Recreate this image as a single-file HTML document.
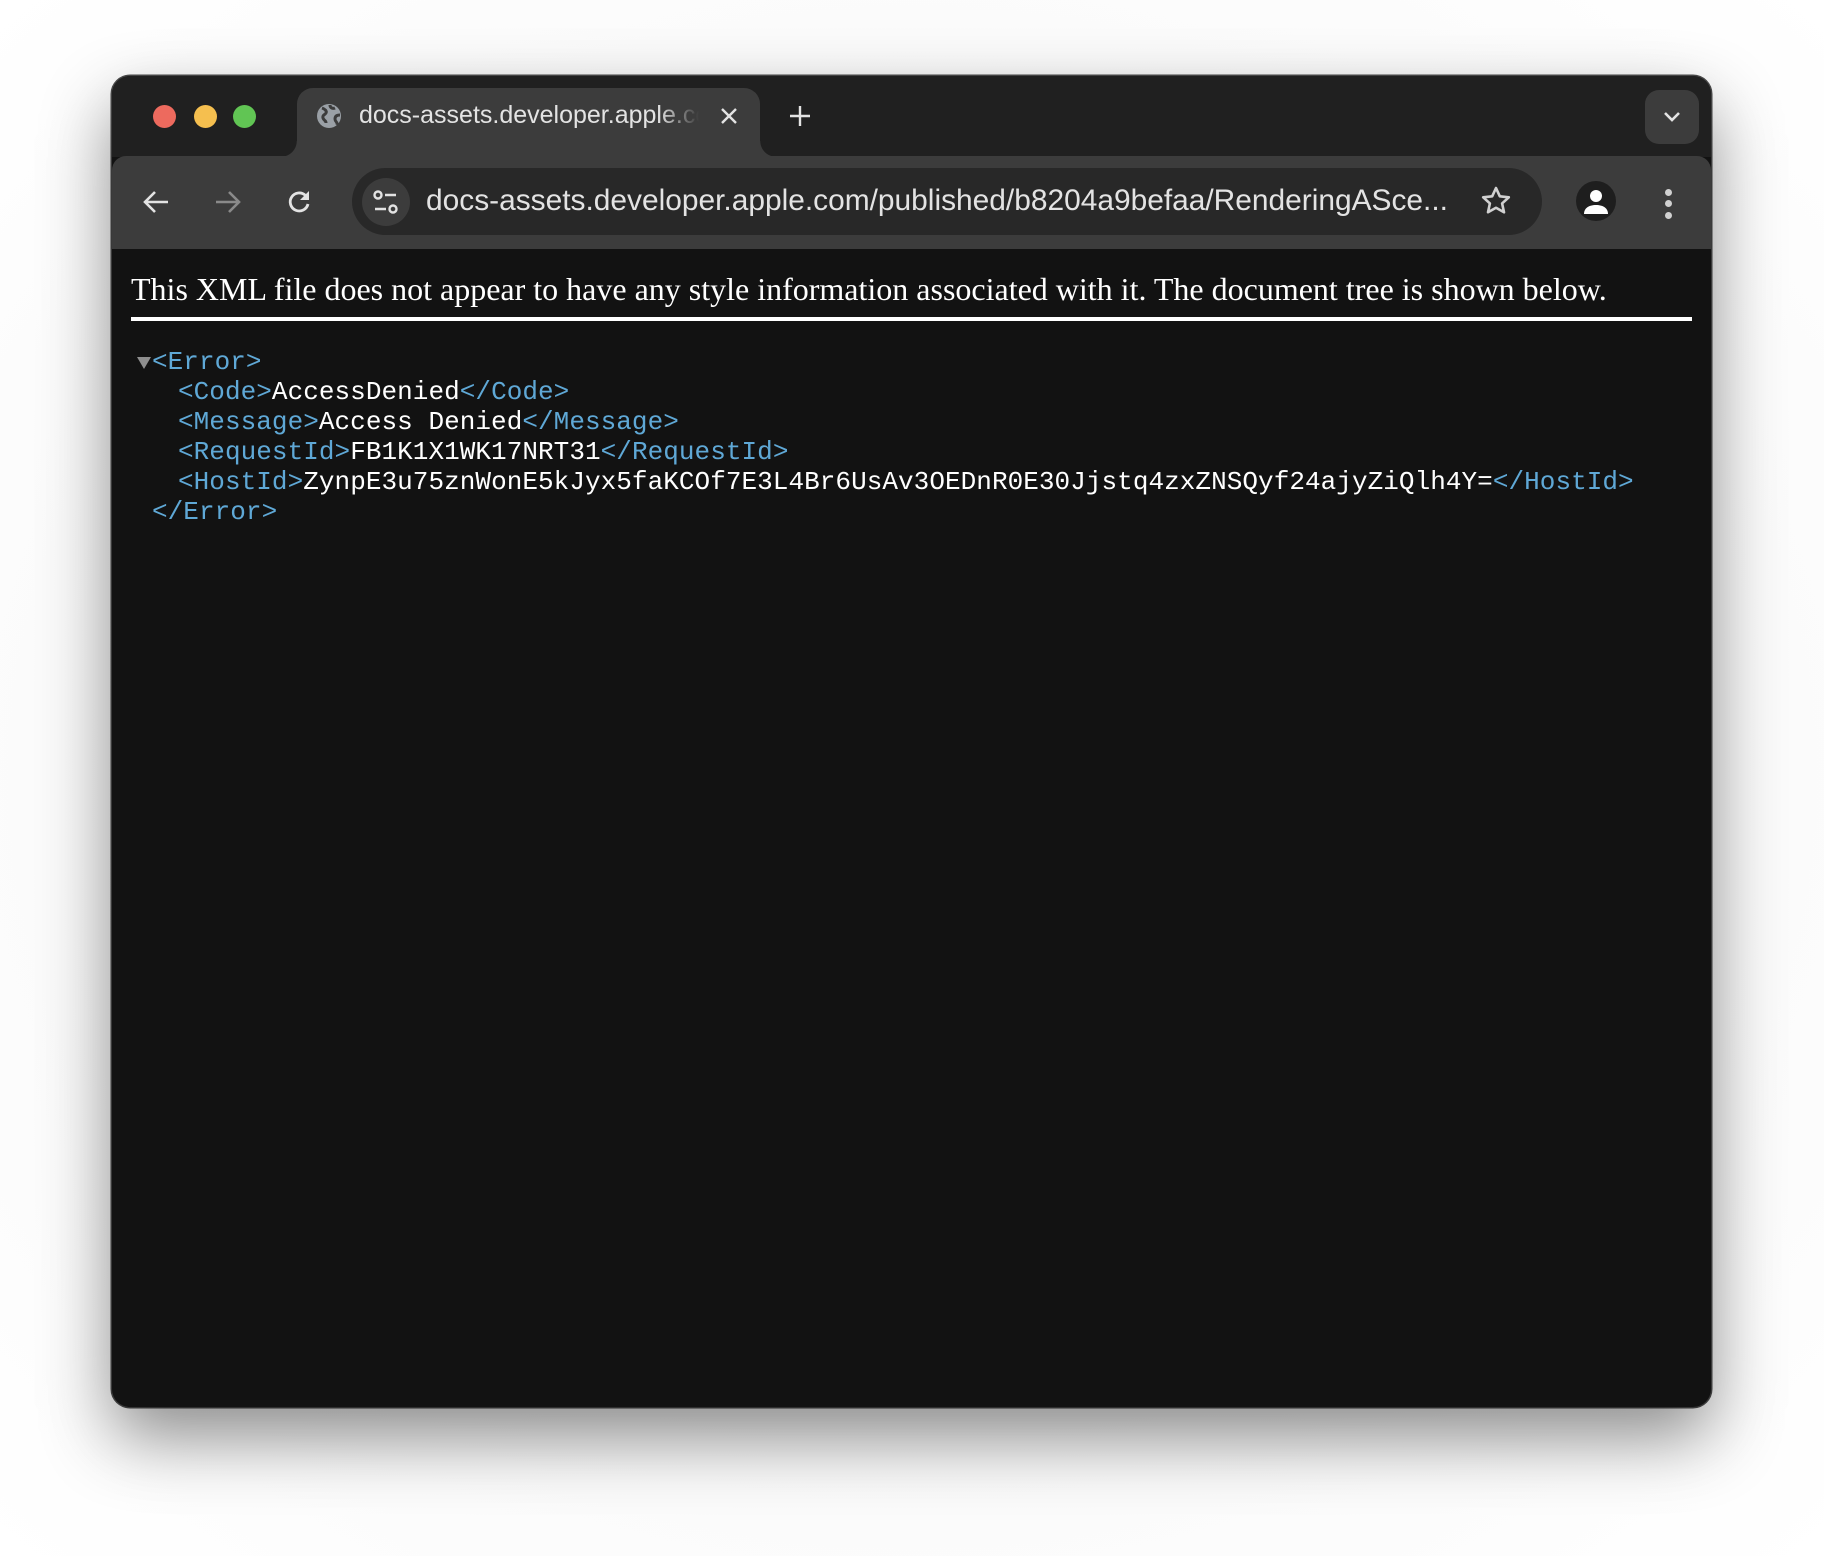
<!DOCTYPE html>
<html><head><meta charset="utf-8"><style>
*{margin:0;padding:0;box-sizing:border-box}
html,body{width:1824px;height:1556px;overflow:hidden;background:#fff}
body{background:radial-gradient(ellipse at 50% 50%,#f6f6f6 0%,#fafafa 60%,#fff 100%);position:relative;font-family:"Liberation Sans",sans-serif}
.win{position:absolute;left:112px;top:76px;width:1599px;height:1331px;border-radius:18px;background:#121212;overflow:hidden;box-shadow:0 30px 70px rgba(0,0,0,.45),0 0 0 1.5px #4a4a4a;}
.tabbar{position:absolute;left:0;top:0;width:100%;height:81px;background:#202020}
.toolbar{position:absolute;left:0;top:80px;width:100%;height:93px;background:#3c3c3c;border-top-left-radius:14px;border-top-right-radius:14px}
.dot{position:absolute;top:29px;width:23px;height:23px;border-radius:50%}
.tab{position:absolute;left:185px;top:12px;width:463px;height:75px;background:#3c3c3c;border-radius:16px 16px 0 0}
.tab:before,.tab:after{content:"";position:absolute;bottom:6px;width:16px;height:16px}
.tab:before{left:-16px;background:radial-gradient(circle at 0 0,#202020 15.5px,#3c3c3c 16px)}
.tab:after{right:-16px;background:radial-gradient(circle at 100% 0,#202020 15.5px,#3c3c3c 16px)}
.tabtxt{position:absolute;left:62px;top:13px;font-size:25px;color:#e3e3e3;white-space:nowrap;width:340px;overflow:hidden;-webkit-mask-image:linear-gradient(90deg,#000 88%,transparent 100%)}
.omni{position:absolute;left:240px;top:12px;width:1190px;height:67px;border-radius:34px;background:#282828}
.url{position:absolute;left:74px;top:16px;font-size:29.9px;color:#e3e3e3;white-space:nowrap}
.hdr{position:absolute;left:19px;top:195px;font-family:"Liberation Serif",serif;font-size:32px;color:#fff;white-space:nowrap}
.rule{position:absolute;left:19px;top:241px;width:1561px;height:4px;background:#fff}
.xml{position:absolute;font-family:"Liberation Mono",monospace;font-size:26px;line-height:30px;color:#fff;white-space:pre;letter-spacing:0.05px}
.t{color:#5fa8d6}
</style></head><body>
<div class="win">
 <div class="tabbar"></div>
 <div class="dot" style="left:41px;background:#ed6a5e"></div>
 <div class="dot" style="left:82px;background:#f5bf4f"></div>
 <div class="dot" style="left:121px;background:#61c554"></div>
 <div class="tab">
  <svg style="position:absolute;left:19px;top:15px" width="26" height="26" viewBox="0 0 26 26"><circle cx="13" cy="13" r="12" fill="#9aa0a6"/><path d="M6 5c3 1 5 3 4 5s-4 2-3 5 3 2 3 5M14 2c0 3 3 4 5 3M24 12c-3 0-5 1-5 4s3 3 2 6" stroke="#3c3c3c" stroke-width="3" fill="none"/></svg>
  <div class="tabtxt">docs-assets.developer.apple.com</div>
  <svg style="position:absolute;left:423px;top:19px" width="18" height="18" viewBox="0 0 18 18"><path d="M2 2L16 16M16 2L2 16" stroke="#e3e3e3" stroke-width="2.4"/></svg>
 </div>
 <svg style="position:absolute;left:677px;top:29px" width="22" height="22" viewBox="0 0 22 22"><path d="M11 1v20M1 11h20" stroke="#e3e3e3" stroke-width="2.4"/></svg>
 <div style="position:absolute;left:1533px;top:14px;width:54px;height:54px;border-radius:14px;background:#3c3c3c"></div>
 <svg style="position:absolute;left:1551px;top:35px" width="18" height="12" viewBox="0 0 18 12"><path d="M2 2l7 7 7-7" stroke="#e3e3e3" stroke-width="2.6" fill="none"/></svg>
 <div class="toolbar">
  <svg style="position:absolute;left:30px;top:33px" width="28" height="26" viewBox="0 0 28 26"><path d="M26 13H4M13 3L3 13l10 10" stroke="#e3e3e3" stroke-width="2.6" fill="none"/></svg>
  <svg style="position:absolute;left:102px;top:33px" width="28" height="26" viewBox="0 0 28 26"><path d="M2 13h22M15 3l10 10-10 10" stroke="#8a8a8a" stroke-width="2.6" fill="none"/></svg>
  <svg style="position:absolute;left:174px;top:32px" width="28" height="28" viewBox="0 0 28 28"><path d="M22 16a9 9 0 1 1-2.6-8.6" stroke="#e3e3e3" stroke-width="2.8" fill="none"/><path d="M23 3v9h-9z" fill="#e3e3e3"/></svg>
  <div class="omni">
   <div style="position:absolute;left:10px;top:10px;width:48px;height:48px;border-radius:50%;background:#3c3c3c"></div>
   <svg style="position:absolute;left:20px;top:21px" width="28" height="26" viewBox="0 0 28 26"><circle cx="6" cy="6" r="3.5" stroke="#e3e3e3" stroke-width="2.4" fill="none"/><path d="M13 6h11M3 20h11" stroke="#e3e3e3" stroke-width="2.6"/><circle cx="21" cy="20" r="3.5" stroke="#e3e3e3" stroke-width="2.4" fill="none"/></svg>
   <div class="url">docs-assets.developer.apple.com/published/b8204a9befaa/RenderingASce...</div>
   <svg style="position:absolute;left:1128px;top:17px" width="32" height="32" viewBox="0 0 32 32"><path d="M16 3l3.8 8.3 9 1-6.7 6.1 1.9 8.9L16 22.8l-8 4.5 1.9-8.9L3.2 12.3l9-1z" stroke="#d0d0d0" stroke-width="2.6" fill="none" stroke-linejoin="round"/></svg>
  </div>
  <div style="position:absolute;left:1464px;top:25px;width:40px;height:40px;border-radius:50%;background:#1e1e1e"></div>
  <svg style="position:absolute;left:1471px;top:32px" width="26" height="28" viewBox="0 0 26 28"><circle cx="13" cy="8" r="6" fill="#fff"/><path d="M1 26c0-6 5-9 12-9s12 3 12 9z" fill="#fff"/></svg>
  <div style="position:absolute;left:1553px;top:33px;width:7px;height:7px;border-radius:50%;background:#d0d0d0"></div>
  <div style="position:absolute;left:1553px;top:44px;width:7px;height:7px;border-radius:50%;background:#d0d0d0"></div>
  <div style="position:absolute;left:1553px;top:56px;width:7px;height:7px;border-radius:50%;background:#d0d0d0"></div>
 </div>
 <div class="hdr">This XML file does not appear to have any style information associated with it. The document tree is shown below.</div>
 <div class="rule"></div>
 <svg style="position:absolute;left:25px;top:281px" width="14" height="12" viewBox="0 0 14 12"><path d="M0 0h14L7 12z" fill="#8e8e8e"/></svg>
 <div class="xml" style="left:40px;top:271px"><span class="t">&lt;Error&gt;</span></div>
 <div class="xml" style="left:66px;top:301px"><span class="t">&lt;Code&gt;</span>AccessDenied<span class="t">&lt;/Code&gt;</span>
<span class="t">&lt;Message&gt;</span>Access Denied<span class="t">&lt;/Message&gt;</span>
<span class="t">&lt;RequestId&gt;</span>FB1K1X1WK17NRT31<span class="t">&lt;/RequestId&gt;</span>
<span class="t">&lt;HostId&gt;</span>ZynpE3u75znWonE5kJyx5faKCOf7E3L4Br6UsAv3OEDnR0E30Jjstq4zxZNSQyf24ajyZiQlh4Y=<span class="t">&lt;/HostId&gt;</span></div>
 <div class="xml" style="left:40px;top:421px"><span class="t">&lt;/Error&gt;</span></div>
</div>
</body></html>
